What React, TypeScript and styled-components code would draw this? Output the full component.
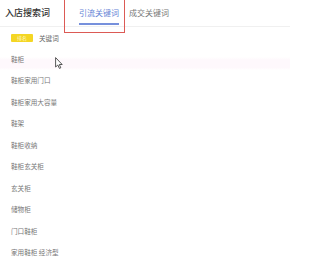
import React from "react";
import styled, { createGlobalStyle, css } from "styled-components";

const keywords = [
  "鞋柜",
  "鞋柜家用门口",
  "鞋柜家用大容量",
  "鞋架",
  "鞋柜收纳",
  "鞋柜玄关柜",
  "玄关柜",
  "储物柜",
  "门口鞋柜",
  "家用鞋柜 经济型",
];

export default function App() {
  return (
    <>
      <GlobalStyle />
      <Panel>
        <Header>
          <Title>入店搜索词</Title>
          <Tabs>
            <Tab active marked>
              引流关键词
            </Tab>
            <Tab>成交关键词</Tab>
          </Tabs>
        </Header>
        <List>
          <HeadRow>
            <Badge>排名</Badge>
            <HeadLabel>关键词</HeadLabel>
          </HeadRow>
          {keywords.map((word, i) => (
            <Row key={word} hovered={i === 0}>
              {word}
            </Row>
          ))}
        </List>
        <Cursor viewBox="0 0 8 12" width="8" height="12">
          <path
            d="M0.6 0.6 L0.6 10 L2.8 8 L4.4 11.4 L5.8 10.8 L4.3 7.5 L7.2 7.5 Z"
            fill="#fff"
            stroke="#444"
            strokeWidth="0.9"
            strokeLinejoin="round"
          />
        </Cursor>
      </Panel>
    </>
  );
}

const GlobalStyle = createGlobalStyle`
  html, body {
    margin: 0;
    padding: 0;
    background: #fff;
  }
  body {
    font-family: "Noto Sans CJK SC", "Noto Sans", sans-serif;
  }
`;

const Panel = styled.div`
  position: relative;
  width: 290px;
  height: 263px;
  overflow: hidden;
  background: #fff;
`;

const Header = styled.div`
  display: flex;
  align-items: stretch;
  height: 26px;
  border-bottom: 1px solid #f0f0f0;
`;

const Title = styled.div`
  padding-left: 5px;
  width: 45px;
  font-size: 9px;
  font-weight: 500;
  line-height: 26px;
  color: #333;
  white-space: nowrap;
`;

const Tabs = styled.div`
  display: flex;
  gap: 10px;
  margin-left: 29px;
`;

const Tab = styled.div<{ active?: boolean; marked?: boolean }>`
  position: relative;
  font-size: 8px;
  line-height: 26px;
  color: #777;
  white-space: nowrap;

  ${({ active }) =>
    active &&
    css`
      color: #6684d6;

      &::after {
        content: "";
        position: absolute;
        left: 0;
        right: 0;
        bottom: 1px;
        height: 2px;
        background: #7690dc;
      }
    `}

  ${({ marked }) =>
    marked &&
    css`
      &::before {
        content: "";
        position: absolute;
        left: -15px;
        right: -6px;
        top: -3px;
        bottom: -7px;
        border: 1.5px solid #dc5a55;
        pointer-events: none;
      }
    `}
`;

const List = styled.div`
  display: flex;
  flex-direction: column;
`;

const HeadRow = styled.div`
  display: flex;
  align-items: center;
  gap: 6px;
  height: 21px;
  padding-left: 11px;
`;

const Badge = styled.span`
  display: inline-flex;
  align-items: center;
  justify-content: center;
  width: 22px;
  height: 8px;
  border-radius: 1px;
  background: #f4d624;
  color: #fff6c8;
  font-size: 5px;
  line-height: 8px;
`;

const HeadLabel = styled.span`
  font-size: 6.6px;
  color: #666;
`;

const Row = styled.div<{ hovered?: boolean }>`
  display: flex;
  align-items: center;
  height: 21.5px;
  padding-left: 11px;
  font-size: 6.6px;
  color: #777;
  white-space: nowrap;

  ${({ hovered }) =>
    hovered &&
    css`
      background: linear-gradient(
        to bottom,
        #fff 40%,
        #fef8fc 55%,
        #fef8fc 90%,
        #fff
      );
    `}
`;

const Cursor = styled.svg`
  position: absolute;
  left: 55px;
  top: 57px;
`;
